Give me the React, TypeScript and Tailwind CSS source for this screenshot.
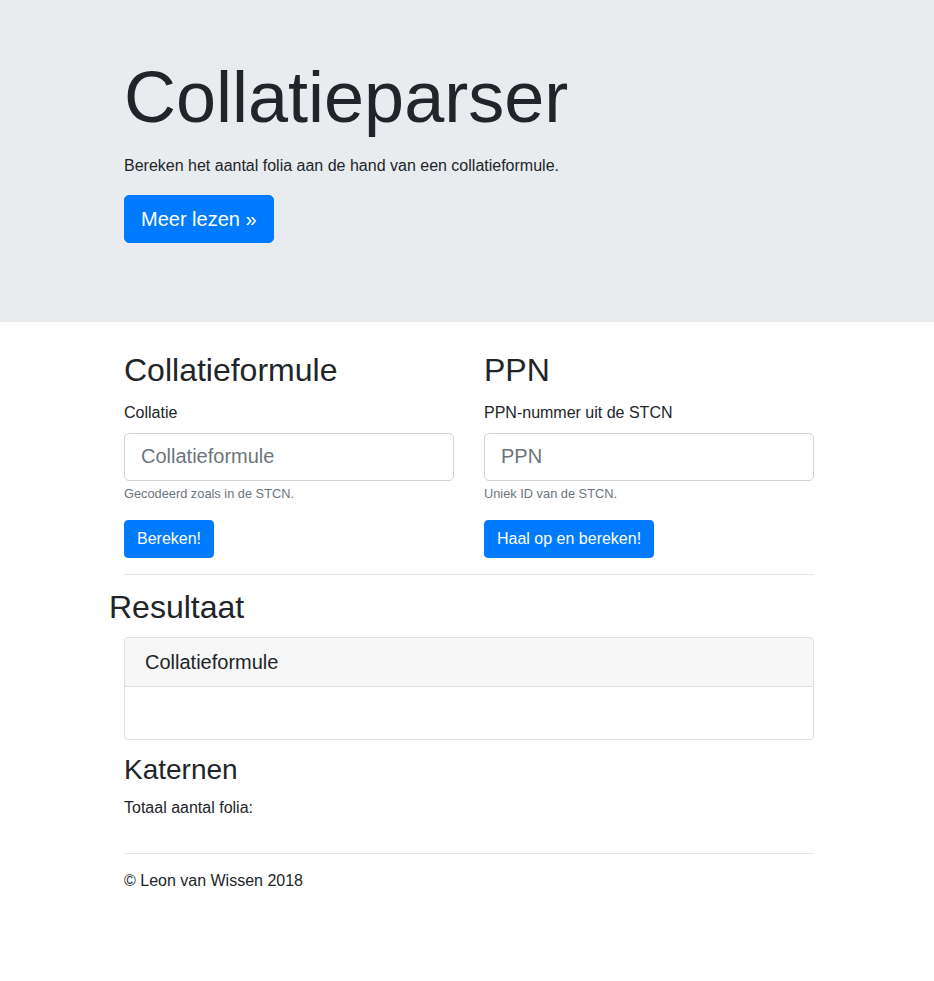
import React from "react";

export default function App() {
  return (
    <div className="min-h-screen bg-white text-[#212529] font-['Liberation_Sans',Arial,sans-serif] text-[16px] leading-[1.5]">
      <div className="bg-[#e9ecef] pt-[54px] pb-[79px]">
        <div className="ml-[109px] w-[720px] px-[15px]">
          <h1 className="text-[72px] leading-[1.2] font-normal mb-[14px]">Collatieparser</h1>
          <p className="mb-[17px]">Bereken het aantal folia aan de hand van een collatieformule.</p>
          <a
            href="#"
            className="inline-block bg-[#007bff] text-white text-[20px] leading-[1.5] px-[16px] py-[8px] border border-[#007bff] rounded-[5px]"
          >
            Meer lezen »
          </a>
        </div>
      </div>

      <div className="ml-[109px] w-[720px] px-[15px] pt-[29px]">
        <div className="grid grid-cols-2 gap-[30px]">
          <div>
            <h2 className="text-[32px] leading-[1.2] font-normal mb-[11px]">Collatieformule</h2>
            <label className="block mb-[8px]">Collatie</label>
            <input
              type="text"
              placeholder="Collatieformule"
              className="block w-full h-[48px] px-[16px] text-[20px] leading-[1.5] border border-[#ced4da] rounded-[5px] placeholder:text-[#6c757d] bg-white outline-none"
            />
            <small className="block mt-[3px] text-[12.8px] leading-[1.5] text-[#6c757d]">Gecodeerd zoals in de STCN.</small>
            <button className="mt-[17px] bg-[#007bff] text-white px-[12px] py-[6px] border border-[#007bff] rounded-[4px] leading-[1.5]">
              Bereken!
            </button>
          </div>
          <div>
            <h2 className="text-[32px] leading-[1.2] font-normal mb-[11px]">PPN</h2>
            <label className="block mb-[8px]">PPN-nummer uit de STCN</label>
            <input
              type="text"
              placeholder="PPN"
              className="block w-full h-[48px] px-[16px] text-[20px] leading-[1.5] border border-[#ced4da] rounded-[5px] placeholder:text-[#6c757d] bg-white outline-none"
            />
            <small className="block mt-[3px] text-[12.8px] leading-[1.5] text-[#6c757d]">Uniek ID van de STCN.</small>
            <button className="mt-[17px] bg-[#007bff] text-white px-[12px] py-[6px] border border-[#007bff] rounded-[4px] leading-[1.5]">
              Haal op en bereken!
            </button>
          </div>
        </div>
        <hr className="mt-[16px] border-0 border-t border-[#e5e5e5]" />
      </div>

      <div className="ml-[109px] w-[720px]">
        <h2 className="mt-[13px] text-[32px] leading-[1.2] font-normal mb-[11px]">Resultaat</h2>
        <div className="px-[15px]">
          <div className="border border-[#dfdfdf] rounded-[4px] overflow-hidden">
            <div className="bg-[#f7f7f7] border-b border-[#dfdfdf] px-[20px] py-[12px]">
              <h5 className="text-[20px] leading-[1.2] font-normal">Collatieformule</h5>
            </div>
            <div className="h-[52px]"></div>
          </div>
          <h3 className="mt-[13px] text-[28px] leading-[1.2] font-normal mb-[9px]">Katernen</h3>
          <p>Totaal aantal folia:</p>
          <hr className="mt-[33px] border-0 border-t border-[#e5e5e5]" />
          <p className="mt-[15px]">© Leon van Wissen 2018</p>
        </div>
      </div>
    </div>
  );
}
